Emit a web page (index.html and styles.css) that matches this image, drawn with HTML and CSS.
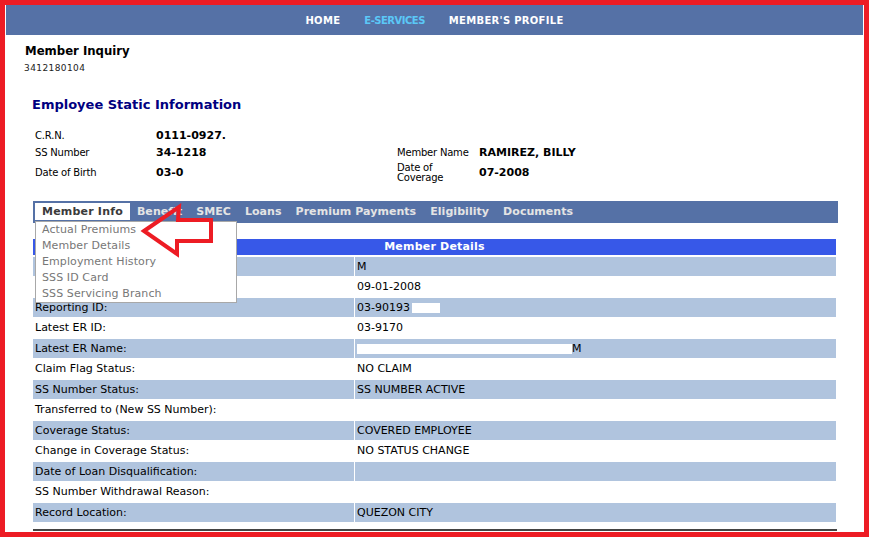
FILE: index.html
```html
<!DOCTYPE html>
<html>
<head>
<meta charset="utf-8">
<title>Member Inquiry</title>
<link rel="stylesheet" href="styles.css">
</head>
<body>
<div class="frame">
  <nav class="topnav">
    <a class="nav-link">HOME</a>
    <a class="nav-link active">E-SERVICES</a>
    <a class="nav-link">MEMBER'S PROFILE</a>
  </nav>
  <h1 class="page-title">Member Inquiry</h1>
  <div class="member-no">3412180104</div>
  <section class="content">
    <h2 class="section-title">Employee Static Information</h2>
    <div class="static-info">
      <span class="lbl">C.R.N.</span><span class="val">0111-0927.</span><span></span><span></span>
      <span class="lbl">SS Number</span><span class="val">34-1218</span><span class="lbl">Member Name</span><span class="val">RAMIREZ, BILLY</span>
      <span class="lbl">Date of Birth</span><span class="val">03-0</span><span class="lbl lbl-2line">Date of<br>Coverage</span><span class="val">07-2008</span>
    </div>
    <ul class="tabs">
      <li class="tab active">Member Info
        <ul class="dropdown">
          <li>Actual Premiums</li>
          <li>Member Details</li>
          <li>Employment History</li>
          <li>SSS ID Card</li>
          <li>SSS Servicing Branch</li>
        </ul>
      </li>
      <li class="tab">Benefit</li>
      <li class="tab">SMEC</li>
      <li class="tab">Loans</li>
      <li class="tab">Premium Payments</li>
      <li class="tab">Eligibility</li>
      <li class="tab">Documents</li>
    </ul>
    <div class="details">
      <div class="details-head">Member Details</div>
      <div class="row shade"><span></span><span>M</span></div>
      <div class="row"><span></span><span>09-01-2008</span></div>
      <div class="row shade"><span>Reporting ID:</span><span>03-90193<i class="redact redact-sm"></i></span></div>
      <div class="row"><span>Latest ER ID:</span><span>03-9170</span></div>
      <div class="row shade"><span>Latest ER Name:</span><span><i class="redact redact-lg"></i>M</span></div>
      <div class="row"><span>Claim Flag Status:</span><span>NO CLAIM</span></div>
      <div class="row shade"><span>SS Number Status:</span><span>SS NUMBER ACTIVE</span></div>
      <div class="row"><span>Transferred to (New SS Number):</span><span></span></div>
      <div class="row shade"><span>Coverage Status:</span><span>COVERED EMPLOYEE</span></div>
      <div class="row"><span>Change in Coverage Status:</span><span>NO STATUS CHANGE</span></div>
      <div class="row shade"><span>Date of Loan Disqualification:</span><span></span></div>
      <div class="row"><span>SS Number Withdrawal Reason:</span><span></span></div>
      <div class="row shade"><span>Record Location:</span><span>QUEZON CITY</span></div>
    </div>
    <div class="rule"></div>
  </section>
  <svg class="arrow" viewBox="135 200 90 65" width="90" height="65">
    <polygon points="144,231 179,207 178,220 211,220 211,241 177,241 177,254" fill="none" stroke="#ED1C24" stroke-width="4" stroke-linejoin="miter"/>
  </svg>
</div>
</body>
</html>
```
FILE: styles.css
```css
body {
  margin: 0;
  font-family: "DejaVu Sans", Verdana, sans-serif;
  background: #fff;
}

.frame {
  width: 869px;
  height: 537px;
  box-sizing: border-box;
  border: 5px solid #ED1C24;
  background: #fff;
  position: relative;
  overflow: hidden;
}

.topnav {
  height: 30px;
  margin: 0 1px;
  background: #5571A6;
  display: flex;
  justify-content: center;
  align-items: center;
  gap: 24px;
}

.nav-link {
  color: #fff;
  font-weight: bold;
  font-size: 10px;
  letter-spacing: 0.3px;
  text-decoration: none;
}

.nav-link.active {
  color: #5BC8F7;
  letter-spacing: -0.5px;
}

.page-title {
  margin: 8px 0 0;
  padding-left: 20px;
  font-family: "DejaVu Sans Condensed", "DejaVu Sans", sans-serif;
  font-stretch: condensed;
  font-weight: bold;
  font-size: 13px;
  line-height: 16px;
  color: #000;
}

.member-no {
  margin-top: 4px;
  padding-left: 19px;
  font-size: 9px;
  line-height: 11px;
  letter-spacing: 0.4px;
  color: #222;
}

.content {
  margin: 23px 0 0 28px;
  width: 805px;
}

.section-title {
  margin: 0 0 0 -1px;
  font-size: 13px;
  line-height: 16px;
  font-weight: bold;
  color: #000080;
}

.static-info {
  display: grid;
  grid-template-columns: 121px 241px 82px 1fr;
  grid-template-rows: 17px 17px 24px;
  align-items: center;
  margin-top: 14px;
  padding-left: 2px;
}

.lbl {
  font-size: 10px;
  line-height: 12px;
  letter-spacing: -0.2px;
  color: #000;
}

.lbl-2line {
  line-height: 10px;
}

.val {
  font-size: 11px;
  line-height: 12px;
  font-weight: bold;
  color: #000;
}

.tabs {
  list-style: none;
  margin: 16px 0 0;
  padding: 2px 2px 0;
  height: 22px;
  box-sizing: border-box;
  background: #5571A6;
  display: flex;
}

.tab {
  position: relative;
  height: 17px;
  line-height: 17px;
  padding: 0 7px;
  font-size: 11px;
  font-weight: bold;
  letter-spacing: 0.05px;
  color: #E4E4E4;
}

.tab.active {
  background: #fff;
  color: #3a3a3a;
  letter-spacing: 0.2px;
}

.dropdown {
  position: absolute;
  top: 18px;
  left: 0;
  width: 202px;
  box-sizing: border-box;
  border: 1px solid #A8A8A8;
  background: #fff;
  list-style: none;
  margin: 0;
  padding: 0;
  z-index: 2;
}

.dropdown li {
  font-weight: normal;
  font-size: 11px;
  line-height: 16px;
  padding-left: 6px;
  letter-spacing: 0.1px;
  color: #777;
}

.details {
  width: 803px;
  margin-top: 16px;
}

.details-head {
  height: 16px;
  line-height: 16px;
  margin-bottom: 2px;
  background: #3758E8;
  color: #fff;
  font-size: 11px;
  font-weight: bold;
  letter-spacing: 0.2px;
  text-align: center;
}

.row {
  display: grid;
  grid-template-columns: 321px 481px;
  column-gap: 1px;
  height: 20px;
  margin-bottom: 1px;
}

.row span {
  padding-left: 2px;
  font-size: 11px;
  line-height: 20px;
  color: #000;
  white-space: nowrap;
}

.row.shade {
  height: 19px;
}

.row.shade span {
  line-height: 19px;
  background: #B0C4DE;
}

.redact {
  display: inline-block;
  height: 10px;
  background: #fff;
  vertical-align: middle;
}

.redact-sm {
  width: 28px;
  margin-left: 2px;
}

.redact-lg {
  width: 215px;
}

.rule {
  width: 804px;
  height: 2px;
  margin-top: 7px;
  background: #444;
}

.arrow {
  position: absolute;
  left: 130px;
  top: 195px;
  z-index: 3;
}
```
